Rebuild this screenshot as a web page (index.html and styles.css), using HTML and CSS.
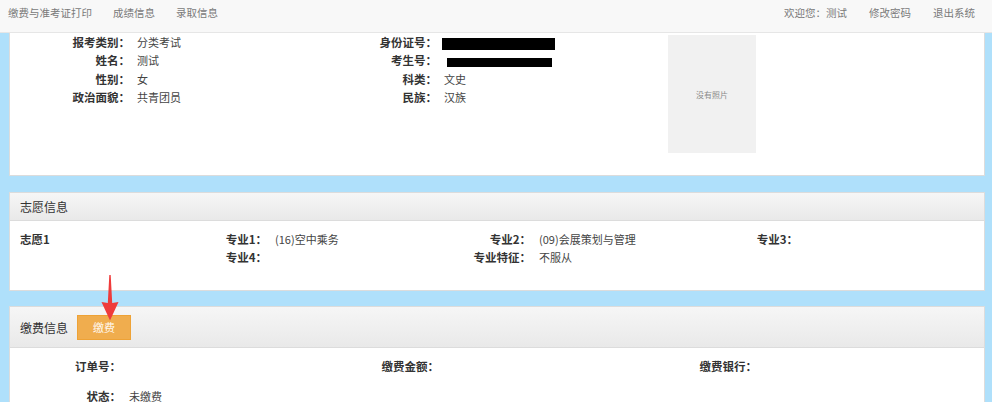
FILE: index.html
```html
<!DOCTYPE html>
<html lang="zh-CN">
<head>
<meta charset="utf-8">
<title>考生信息</title>
<link rel="stylesheet" href="styles.css">
</head>
<body>
<div class="nav">
  <div class="nav-left">
    <a class="nav-link">缴费与准考证打印</a>
    <a class="nav-link">成绩信息</a>
    <a class="nav-link">录取信息</a>
  </div>
  <div class="nav-right">
    <a class="nav-link">欢迎您：测试</a>
    <a class="nav-link">修改密码</a>
    <a class="nav-link">退出系统</a>
  </div>
</div>

<div class="main">
  <div class="panel panel-basic">
    <div class="basic-grid">
      <div class="lbl">报考类别：</div><div class="val">分类考试</div>
      <div class="lbl">身份证号：</div><div class="val"><span class="redact redact-1"></span></div>
      <div class="lbl">姓名：</div><div class="val">测试</div>
      <div class="lbl">考生号：</div><div class="val"><span class="redact redact-2"></span></div>
      <div class="lbl">性别：</div><div class="val">女</div>
      <div class="lbl">科类：</div><div class="val">文史</div>
      <div class="lbl">政治面貌：</div><div class="val">共青团员</div>
      <div class="lbl">民族：</div><div class="val">汉族</div>
    </div>
    <div class="photo">没有照片</div>
  </div>

  <div class="panel panel-wish">
    <div class="panel-head">志愿信息</div>
    <div class="wish-grid">
      <div class="wish-name">志愿1</div>
      <div class="lbl">专业1：</div><div class="val">(16)空中乘务</div>
      <div class="lbl">专业2：</div><div class="val">(09)会展策划与管理</div>
      <div class="lbl">专业3：</div><div class="val"></div>
      <div></div>
      <div class="lbl">专业4：</div><div class="val"></div>
      <div class="lbl">专业特征：</div><div class="val">不服从</div>
      <div></div><div></div>
    </div>
  </div>

  <div class="panel panel-pay">
    <div class="panel-head pay-head">
      <span>缴费信息</span>
      <button class="pay-btn">缴费</button>
    </div>
    <div class="pay-grid">
      <div class="lbl">订单号：</div><div class="val"></div>
      <div class="lbl">缴费金额：</div><div class="val"></div>
      <div class="lbl">缴费银行：</div><div class="val"></div>
      <div class="lbl">状态：</div><div class="val">未缴费</div>
    </div>
    <svg class="arrow" width="20" height="50" viewBox="0 0 20 50">
      <polygon points="9.3,3 10.7,3 12.2,31 18.5,30 10,48.5 1.5,30 7.8,31" fill="#ef3b3b"/>
    </svg>
  </div>
</div>
</body>
</html>
```

FILE: styles.css
```css
* { box-sizing: border-box; }

body {
  margin: 0;
  background: #afe0fb;
  font-family: "Noto Sans CJK SC", "Noto Sans", sans-serif;
  color: #444;
  overflow: hidden;
}

.nav {
  height: 33px;
  background: #f8f8f8;
  border-bottom: 1px solid #e6e6e6;
  display: flex;
  justify-content: space-between;
  padding: 6px 17px 0 8px;
  font-size: 10.5px;
  line-height: 14px;
  color: #7a7a7a;
}

.nav-left, .nav-right {
  display: flex;
  gap: 21px;
}

.nav-right { gap: 22px; }

.main {
  padding: 0 7px 0 9px;
}

.panel {
  background: #fff;
  border: 1px solid #dcdcdc;
}

.panel-basic {
  border-top: none;
  display: flex;
  align-items: flex-start;
}

.lbl {
  text-align: right;
  font-weight: bold;
  font-size: 11.5px;
  color: #333;
  white-space: nowrap;
}

.val {
  padding-left: 7px;
  font-size: 11px;
  color: #444;
  white-space: nowrap;
}

.basic-grid {
  display: grid;
  grid-template-columns: 120px 177px 130px 217px;
  grid-auto-rows: 18.3px;
  line-height: 18.3px;
}

.redact {
  display: inline-block;
  background: #000;
  vertical-align: middle;
}

.redact-1 {
  width: 113px;
  height: 12px;
  margin-left: -2px;
}

.redact-2 {
  width: 105px;
  height: 9px;
  margin-left: 3px;
  margin-top: 1px;
}

.photo {
  width: 88px;
  height: 118px;
  margin: 2px 0 22px 14px;
  background: #f1f1f1;
  color: #8a8a8a;
  font-size: 8px;
  display: flex;
  align-items: center;
  justify-content: center;
}

.panel-wish {
  margin-top: 16px;
}

.panel-head {
  height: 28px;
  padding-left: 10px;
  line-height: 27px;
  font-size: 12px;
  color: #333;
  background: linear-gradient(#f6f6f6, #e9e9e9);
  border-bottom: 1px solid #dcdcdc;
}

.wish-grid {
  display: grid;
  grid-template-columns: 180px 67px 193px 71px 194px 73px 1fr;
  grid-auto-rows: 18px;
  line-height: 18px;
  padding: 9px 0 24px 10px;
}

.wish-grid .val { padding-left: 8px; }

.wish-name {
  font-weight: bold;
  font-size: 11.5px;
  color: #333;
}

.panel-pay {
  margin-top: 15px;
  position: relative;
  min-height: 100px;
}

.pay-head {
  height: 41px;
  display: flex;
  align-items: center;
  line-height: normal;
}

.pay-btn {
  margin-left: 9px;
  width: 54px;
  height: 25px;
  background: #f0ad4e;
  border: 1px solid #eea236;
  border-radius: 0;
  color: #fff8ee;
  font-family: inherit;
  font-size: 11px;
  padding: 0;
}

.pay-grid {
  display: grid;
  grid-template-columns: 111px 206px 112px 206px 112px 1fr;
  grid-auto-rows: 12px;
  row-gap: 18px;
  line-height: 12px;
  padding-top: 12px;
}

.pay-grid .val { padding-left: 8px; }

.arrow {
  position: absolute;
  left: 90px;
  top: -35px;
}
```
